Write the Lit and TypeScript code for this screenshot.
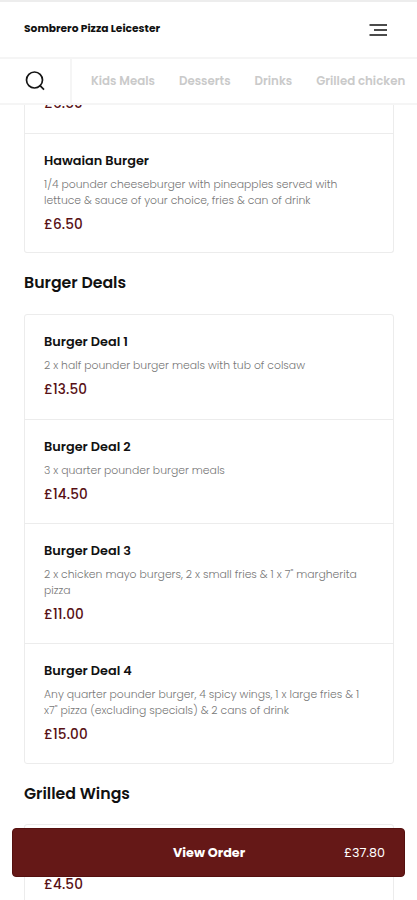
import { LitElement, html, css, svg } from "lit";
import { customElement } from "lit/decorators.js";

interface Dish { name: string; about: string[]; price: string; }

const hawaian: Dish = {
  name: "Hawaian Burger",
  about: ["1/4 pounder cheeseburger with pineapples served with", "lettuce & sauce of your choice, fries & can of drink"],
  price: "£6.50",
};

const deals: Dish[] = [
  { name: "Burger Deal 1", about: ["2 x half pounder burger meals with tub of colsaw"], price: "£13.50" },
  { name: "Burger Deal 2", about: ["3 x quarter pounder burger meals"], price: "£14.50" },
  { name: "Burger Deal 3", about: ["2 x chicken mayo burgers, 2 x small fries & 1 x 7\" margherita", "pizza"], price: "£11.00" },
  {
    name: "Burger Deal 4",
    about: ["Any quarter pounder burger, 4 spicy wings, 1 x large fries & 1", "x7\" pizza (excluding specials) & 2 cans of drink"],
    price: "£15.00",
  },
];

const categories = ["Kids Meals", "Desserts", "Drinks", "Grilled chicken"];

@customElement("app-root")
export class AppRoot extends LitElement {
  static styles = css`
    :host {
      display: block; position: relative; width: 417px; height: 900px; overflow: hidden;
      box-sizing: border-box; background: #fff; color: #111; white-space: nowrap;
      font-family: Poppins, Inter, "Open Sans", sans-serif;
    }
    * { box-sizing: border-box; }
    .page { display: flex; flex-direction: column; height: 900px; }
    .top {
      flex: none; height: 59px; border-top: 2px solid #ededed; border-bottom: 2px solid #f5f5f5;
      display: flex; align-items: center; justify-content: space-between; padding: 0 30px 0 24px;
    }
    .brand { font-size: 10.7px; font-weight: 700; line-height: 16px; margin-top: -1px; }
    .menu { display: block; width: 18px; height: 14px; }
    .nav { flex: none; height: 46px; display: flex; border-bottom: 2px solid #f5f5f5; }
    .find { width: 72px; flex: none; border-right: 2px solid #f5f5f5; padding: 12px 0 0 25px; }
    .find svg { display: block; }
    .tabs {
      display: flex; align-items: center; gap: 24px; padding-left: 19px;
      font-size: 11.8px; font-weight: 600; color: #cacaca; line-height: 18px;
    }
    .content { flex: 1; min-height: 0; overflow: hidden; padding: 0 23px 0 24px; }
    .card { border: 1px solid #ececec; border-radius: 3px; }
    .card.cut { border-top: 0; border-radius: 0 0 3px 3px; }
    .peek { height: 28px; overflow: hidden; padding-left: 19px; display: flex; }
    .peek .price { margin-top: -11px; }
    .dish { padding: 18px 0 18px 19px; border-top: 1px solid #ececec; }
    .cut .dish { padding-bottom: 17px; }
    .card:not(.cut) .dish:first-child { border-top: 0; padding-bottom: 19px; }
    .name { font-size: 12.85px; font-weight: 600; line-height: 18px; }
    .about { margin-top: 7px; font-size: 10.82px; font-weight: 300; line-height: 16px; color: #777; }
    .price { margin-top: 6px; font-size: 13.6px; font-weight: 500; line-height: 20px; letter-spacing: 0.15px; color: #570f14; }
    h2 { margin: 0; height: 61px; padding-top: 18px; font-size: 15.75px; font-weight: 600; line-height: 24px; }
    h2.wings { height: 60px; }
    .last { height: 100px; padding: 44px 0 0 19px; }
    .order {
      position: absolute; left: 12px; top: 828px; width: 393px; height: 49px;
      border: 1px solid #54100f; border-radius: 4px; background: #651817; color: #fff;
      display: flex; justify-content: space-between; align-items: center; padding: 0 19px 0 160px;
    }
    .view { font-size: 12.75px; font-weight: 700; }
    .total { font-size: 12.7px; font-weight: 400; }
  `;

  private dish(d: Dish) {
    return html`<div class="dish">
      <div class="name">${d.name}</div>
      <div class="about">${d.about.map((line) => html`<div>${line}</div>`)}</div>
      <div class="price">${d.price}</div>
    </div>`;
  }

  render() {
    return html`
      <div class="page">
        <header class="top">
          <div class="brand">Sombrero Pizza Leicester</div>
          <svg class="menu" viewBox="0 0 18 14" fill="none" stroke="#111" stroke-width="1.7">
            ${svg`<path d="M0.5 2H18M5 7H18M0.5 12H18" />`}
          </svg>
        </header>
        <nav class="nav">
          <div class="find">
            <svg width="20" height="20" viewBox="0 0 20 20" fill="none" stroke="#151515" stroke-width="1.7">
              <circle cx="9.5" cy="9" r="8" /><path d="M14.6 14.2L19 18.6" />
            </svg>
          </div>
          <div class="tabs">${categories.map((c) => html`<span>${c}</span>`)}</div>
        </nav>
        <main class="content">
          <section class="card cut">
            <div class="peek"><div class="price">£6.50</div></div>
            ${this.dish(hawaian)}
          </section>
          <h2>Burger Deals</h2>
          <section class="card">${deals.map((d) => this.dish(d))}</section>
          <h2 class="wings">Grilled Wings</h2>
          <section class="card last"><div class="price">£4.50</div></section>
        </main>
      </div>
      <div class="order">
        <span class="view">View Order</span>
        <span class="total">£37.80</span>
      </div>
    `;
  }
}
